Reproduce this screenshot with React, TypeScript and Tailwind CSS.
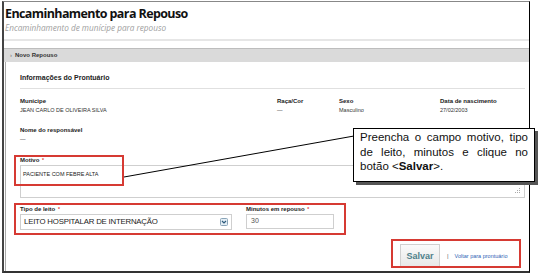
import React from 'react';

const label = 'font-bold text-[6px] leading-[9px] text-[#222]';
const value = 'text-[5.5px] leading-[9px] text-[#333]';

function Req() {
  return <span className="text-[#d33] ml-[1px] align-top text-[5px]">*</span>;
}

export default function App() {
  return (
    <div className="relative w-[542px] h-[279px] bg-white overflow-hidden pt-[1px] pl-[2px] font-['Liberation_Sans',Arial,sans-serif]">
      {/* Page frame */}
      <div className="w-[528px] h-[272px] border-t border-t-[#888] border-l-2 border-l-[#444] border-r border-r-black border-b-2 border-b-[#333] flex flex-col">
        {/* Header */}
        <div className="pl-[1px] pt-[4px]">
          <h1 className="font-['Open_Sans',sans-serif] font-bold text-[12.5px] leading-[16px] text-[#111] tracking-[-0.6px]">
            Encaminhamento para Repouso
          </h1>
          <p className="font-['Open_Sans',sans-serif] italic text-[8.2px] leading-[11px] text-[#a0a0a0]">
            Encaminhamento de munícipe para repouso
          </p>
        </div>
        <div className="mt-[6px] h-[2px] bg-[#e6e6e6]" />

        {/* Section bar */}
        <div className="mt-[7px] h-[14px] border-t border-[#bdbdbd] bg-[#dadada] flex items-center pl-[6px] text-[6px] font-bold text-[#333]">
          <span className="text-[#888] mr-[3px]">›</span>Novo Repouso
        </div>

        {/* Panel content */}
        <div className="flex-1 ml-[1px] border-l border-[#aaa] pl-[14px] pr-[4px] flex flex-col">
          <div className="pt-[11px] font-bold text-[7px] leading-[10px] text-[#222]">Informações do Prontuário</div>
          <div className="mt-[5px] border-b border-[#e0e0e0]" />

          <div className="mt-[8px] flex">
            <div className="w-[257px]">
              <div className={label}>Munícipe</div>
              <div className={value}>JEAN CARLO DE OLIVEIRA SILVA</div>
            </div>
            <div className="w-[62px]">
              <div className={label}>Raça/Cor</div>
              <div className={value}>—</div>
            </div>
            <div className="w-[101px]">
              <div className={label}>Sexo</div>
              <div className={value}>Masculino</div>
            </div>
            <div>
              <div className={label}>Data de nascimento</div>
              <div className={value}>27/02/2003</div>
            </div>
          </div>

          <div className="mt-[11px]">
            <div className={label}>Nome do responsável</div>
            <div className={value}>—</div>
          </div>

          <div className="mt-[12px]">
            <div className={label}>
              Motivo <Req />
            </div>
            <div className="relative h-[33px] border border-[#cfcfcf] pl-[2px] pt-[4px] text-[5.5px] leading-[9px] text-[#222]">
              PACIENTE COM FEBRE ALTA
              <svg className="absolute right-[3px] bottom-[3px]" width="6" height="6" viewBox="0 0 6 6">
                <rect x="4" y="0" width="1" height="1" fill="#aaa" />
                <rect x="2" y="2" width="1" height="1" fill="#aaa" />
                <rect x="4" y="2" width="1" height="1" fill="#aaa" />
                <rect x="0" y="4" width="1" height="1" fill="#aaa" />
                <rect x="2" y="4" width="1" height="1" fill="#aaa" />
                <rect x="4" y="4" width="1" height="1" fill="#aaa" />
              </svg>
            </div>
          </div>

          {/* Tipo de leito + minutos */}
          <div className="mt-[5px] -ml-[6px] w-[332px] h-[32px] border-2 border-[#d63a33] pl-[4px] flex gap-[14px]">
            <div className="w-[212px]">
              <div className={label}>
                Tipo de leito <Req />
              </div>
              <div className="h-[16px] border border-[#cfcfcf] flex items-center justify-between pl-[3px] pr-[3px]">
                <span className="text-[7.8px] text-[#222] tracking-[-0.2px]">LEITO HOSPITALAR DE INTERNAÇÃO</span>
                <svg width="8" height="8" viewBox="0 0 8 8">
                  <rect x="0.5" y="0.5" width="7" height="7" rx="1" fill="#e4eef5" stroke="#8aa4b8" />
                  <path d="M2 3 L4 5 L6 3" fill="none" stroke="#2c5a7c" strokeWidth="1.2" />
                </svg>
              </div>
            </div>
            <div className="w-[88px]">
              <div className={label}>
                Minutos em repouso <Req />
              </div>
              <div className="h-[15px] border border-[#cfcfcf] flex items-center pl-[4px] text-[7px] text-[#555]">30</div>
            </div>
          </div>

          {/* Actions */}
          <div className="mt-[4px] ml-auto mr-[4px] w-[130px] h-[29px] border-2 border-[#d63a33] flex items-end pl-[7px] gap-[7px]">
            <button className="w-[40px] h-[22px] bg-gradient-to-b from-[#fafafa] to-[#e8e8e8] border border-[#d0d0d0] border-b-0 text-[9px] font-bold text-[#4f7f8a] pt-[2px]">
              Salvar
            </button>
            <div className="h-[22px] flex items-center gap-[6px] pt-[2px]">
              <span className="text-[6px] text-[#666]">|</span>
              <span className="text-[5.5px] text-[#2f5fb5]">Voltar para prontuário</span>
            </div>
          </div>
        </div>
      </div>

      {/* Annotation: red box over Motivo */}
      <div className="absolute left-[14px] top-[155px] w-[110px] h-[31px] border-2 border-[#d63a33]" />

      {/* Annotation: leader line */}
      <svg className="absolute left-0 top-0" width="542" height="279" viewBox="0 0 542 279">
        <line x1="124" y1="177" x2="354" y2="136" stroke="#000" strokeWidth="1" />
      </svg>

      {/* Annotation: callout */}
      <div className="absolute left-[353px] top-[128px] w-[182px] h-[54px] bg-white border border-black shadow-[3px_3px_0_#555] px-[6px] pt-[1px] text-[11.5px] leading-[14.5px] text-[#111] text-justify">
        <p>
          Preencha o campo motivo, tipo de leito, minutos e clique no botão &lt;<b>Salvar</b>&gt;.
        </p>
      </div>
    </div>
  );
}
